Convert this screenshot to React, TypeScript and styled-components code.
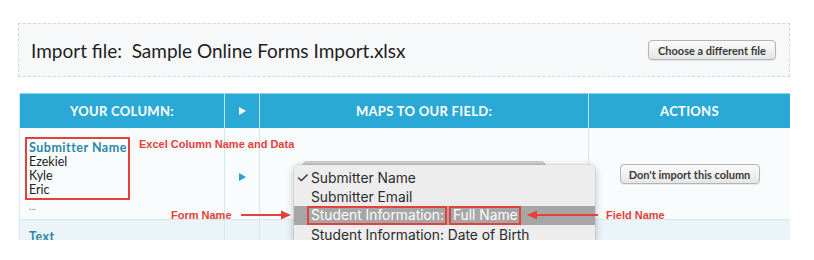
import * as React from 'react'
import styled, { createGlobalStyle } from 'styled-components'

const GlobalStyle = createGlobalStyle`
  body {
    margin: 0;
    background: #ffffff;
    font-family: Lato, "Open Sans", sans-serif;
  }
`

const Frame = styled.div`
  position: relative;
  width: 814px;
  height: 240px;
  overflow: hidden;
  padding: 23px 24px 0 18px;
  box-sizing: border-box;
`
const FileBar = styled.div`
  display: flex;
  align-items: center;
  justify-content: space-between;
  height: 54px;
  box-sizing: border-box;
  border: 1px dashed #d4d6da;
  background: #f7f8fa;
  padding: 0 13px 0 12px;
`
const FileTitle = styled.div`
  font-size: 19px;
  color: #1e1e1e;
  white-space: pre;
`
const GreyButton = styled.button<{ $width: number }>`
  width: ${({ $width }) => $width}px;
  height: 20px;
  padding: 0;
  border: 1px solid #b4b4b4;
  border-radius: 4px;
  background: linear-gradient(#fbfbfb, #e6e6e6);
  font-family: Lato, sans-serif;
  font-size: 11px;
  font-weight: 700;
  color: #3a3a3a;
  box-shadow: 0 1px 1px rgba(0, 0, 0, 0.08);
`
const Table = styled.div`
  display: grid;
  grid-template-columns: 205px 35px 329px 201px;
  margin: 16px 0 0 1px;
  width: 770px;
  border-left: 1px solid #d6e7ef;
  border-right: 1px solid #d6e7ef;
  box-sizing: border-box;
`
const HeadCell = styled.div<{ $last?: boolean }>`
  height: 35px;
  display: flex;
  align-items: center;
  justify-content: center;
  background: #2aa9d6;
  border-top: 1px solid #8fd2ea;
  border-right: ${({ $last }) => ($last ? 'none' : '1px solid #bfe5f3')};
  box-sizing: border-box;
  color: #ffffff;
  font-size: 13px;
  font-weight: 700;
  letter-spacing: 0.3px;
`
const Cell = styled.div<{ $alt?: boolean; $last?: boolean; $center?: boolean }>`
  position: relative;
  height: ${({ $alt }) => ($alt ? '30px' : '92px')};
  box-sizing: border-box;
  background: ${({ $alt }) => ($alt ? '#eaf4f9' : '#f9fcfd')};
  border-right: ${({ $last }) => ($last ? 'none' : '1px solid #d6e7ef')};
  border-bottom: 1px solid #d9e9f1;
  display: flex;
  flex-direction: column;
  align-items: ${({ $center }) => ($center ? 'center' : 'flex-start')};
  justify-content: ${({ $center }) => ($center ? 'center' : 'flex-start')};
`
const ColumnCell = styled(Cell)`
  padding: 9px 0 0 5px;
`
const DataBox = styled.div`
  border: 2px solid #e5403a;
  padding: 1px 3px 1px 2px;
  width: 105px;
  box-sizing: border-box;
`
const ColumnName = styled.div`
  font-size: 12.5px;
  font-weight: 700;
  color: #2a87a6;
  letter-spacing: 0.5px;
  line-height: 15px;
  white-space: nowrap;
`
const DataLine = styled.div`
  font-size: 12.5px;
  color: #222;
  line-height: 14px;
`
const More = styled.div`
  font-size: 10px;
  color: #777;
  margin: 0 0 0 4px;
  line-height: 12px;
`
const Triangle = styled.span<{ $color: string }>`
  width: 0;
  height: 0;
  border-top: 4px solid transparent;
  border-bottom: 4px solid transparent;
  border-left: 7px solid ${({ $color }) => $color};
`
const ArrowCell = styled(Cell)`
  padding-top: 6px;
`
const SelectBack = styled.div`
  position: absolute;
  left: 42px;
  top: 33px;
  width: 244px;
  height: 22px;
  border-radius: 5px;
  background: linear-gradient(#d0d0d0, #bdbdbd);
`
const Menu = styled.div`
  position: absolute;
  left: 34px;
  top: 37px;
  width: 301px;
  padding-top: 3px;
  background: #ededed;
  border-radius: 5px;
  box-shadow: 0 2px 8px rgba(0, 0, 0, 0.25), 0 0 0 1px rgba(0, 0, 0, 0.06);
  font-family: Inter, "Noto Sans", sans-serif;
  font-size: 13.8px;
  z-index: 2;
`
const MenuItem = styled.div<{ $active?: boolean }>`
  display: flex;
  align-items: center;
  height: 19px;
  padding-left: 17px;
  position: relative;
  background: ${({ $active }) => ($active ? '#a6a6a6' : 'transparent')};
  color: ${({ $active }) => ($active ? '#ffffff' : '#2b2b2b')};
  white-space: nowrap;
`
const Check = styled.span`
  position: absolute;
  left: 2px;
  font-size: 15px;
`
const Boxed = styled.span<{ $gap: number }>`
  border: 2px solid #e5403a;
  height: 19px;
  line-height: 15px;
  box-sizing: border-box;
  padding: 0 1px 0 2px;
  margin-left: ${({ $gap }) => $gap}px;
`
const ActionsCell = styled(Cell)`
  padding-top: 36px;
  align-items: center;
`
const RowLabel = styled.div`
  font-size: 12.5px;
  font-weight: 700;
  color: #2a87a6;
  letter-spacing: 0.5px;
  padding: 9px 0 0 9px;
`
const Note = styled.div<{ $x: number; $y: number }>`
  position: absolute;
  left: ${({ $x }) => $x}px;
  top: ${({ $y }) => $y}px;
  font-family: "Liberation Sans", Arial, sans-serif;
  font-size: 11px;
  font-weight: 700;
  color: #e5403a;
  white-space: nowrap;
  z-index: 3;
`
const Arrow = styled.svg<{ $x: number; $y: number }>`
  position: absolute;
  left: ${({ $x }) => $x}px;
  top: ${({ $y }) => $y}px;
  z-index: 3;
`

const RedArrow = ({ x, y, w, left }: { x: number; y: number; w: number; left?: boolean }) => (
  <Arrow $x={x} $y={y} width={w} height={10} viewBox={`0 0 ${w} 10`}>
    {left ? (
      <>
        <line x1={8} y1={5} x2={w} y2={5} stroke="#e5403a" strokeWidth={2} />
        <polygon points={`0,5 10,0.5 10,9.5`} fill="#e5403a" />
      </>
    ) : (
      <>
        <line x1={0} y1={5} x2={w - 8} y2={5} stroke="#e5403a" strokeWidth={2} />
        <polygon points={`${w},5 ${w - 10},0.5 ${w - 10},9.5`} fill="#e5403a" />
      </>
    )}
  </Arrow>
)

export default function App() {
  return (
    <>
      <GlobalStyle />
      <Frame>
        <FileBar>
          <FileTitle>Import file:  Sample Online Forms Import.xlsx</FileTitle>
          <GreyButton $width={128}>Choose a different file</GreyButton>
        </FileBar>
        <Table>
          <HeadCell>YOUR COLUMN:</HeadCell>
          <HeadCell>
            <Triangle $color="#ffffff" />
          </HeadCell>
          <HeadCell>MAPS TO OUR FIELD:</HeadCell>
          <HeadCell $last>ACTIONS</HeadCell>

          <ColumnCell>
            <DataBox>
              <ColumnName>Submitter Name</ColumnName>
              <DataLine>Ezekiel</DataLine>
              <DataLine>Kyle</DataLine>
              <DataLine>Eric</DataLine>
            </DataBox>
            <More>...</More>
          </ColumnCell>
          <ArrowCell $center>
            <Triangle $color="#2a9fd0" />
          </ArrowCell>
          <Cell>
            <SelectBack />
            <Menu>
              <MenuItem>
                <Check>✓</Check>Submitter Name
              </MenuItem>
              <MenuItem>Submitter Email</MenuItem>
              <MenuItem $active>
                <Boxed $gap={-4}>Student Information:</Boxed>
                <Boxed $gap={2}>Full Name</Boxed>
              </MenuItem>
              <MenuItem>Student Information: Date of Birth</MenuItem>
            </Menu>
          </Cell>
          <ActionsCell $last>
            <GreyButton $width={140}>Don't import this column</GreyButton>
          </ActionsCell>

          <Cell $alt>
            <RowLabel>Text</RowLabel>
          </Cell>
          <Cell $alt />
          <Cell $alt />
          <Cell $alt $last />
        </Table>

        <Note $x={139} $y={138}>Excel Column Name and Data</Note>
        <Note $x={171} $y={209}>Form Name</Note>
        <RedArrow x={241} y={210} w={50} />
        <RedArrow x={527} y={210} w={71} left />
        <Note $x={606} $y={209}>Field Name</Note>
      </Frame>
    </>
  )
}
